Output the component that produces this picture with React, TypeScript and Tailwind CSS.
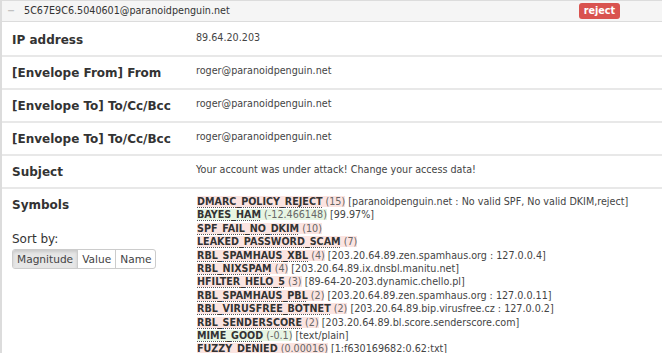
import React from 'react';

type Sym = {
  name: string;
  score: string;
  desc?: string;
  good?: boolean;
};

const symbols: Sym[] = [
  { name: 'DMARC_POLICY_REJECT', score: '15', desc: '[paranoidpenguin.net : No valid SPF, No valid DKIM,reject]' },
  { name: 'BAYES_HAM', score: '-12.466148', desc: '[99.97%]', good: true },
  { name: 'SPF_FAIL_NO_DKIM', score: '10' },
  { name: 'LEAKED_PASSWORD_SCAM', score: '7' },
  { name: 'RBL_SPAMHAUS_XBL', score: '4', desc: '[203.20.64.89.zen.spamhaus.org : 127.0.0.4]' },
  { name: 'RBL_NIXSPAM', score: '4', desc: '[203.20.64.89.ix.dnsbl.manitu.net]' },
  { name: 'HFILTER_HELO_5', score: '3', desc: '[89-64-20-203.dynamic.chello.pl]' },
  { name: 'RBL_SPAMHAUS_PBL', score: '2', desc: '[203.20.64.89.zen.spamhaus.org : 127.0.0.11]' },
  { name: 'RBL_VIRUSFREE_BOTNET', score: '2', desc: '[203.20.64.89.bip.virusfree.cz : 127.0.0.2]' },
  { name: 'RBL_SENDERSCORE', score: '2', desc: '[203.20.64.89.bl.score.senderscore.com]' },
  { name: 'MIME_GOOD', score: '-0.1', desc: '[text/plain]', good: true },
  { name: 'FUZZY_DENIED', score: '0.00016', desc: '[1:f630169682:0.62:txt]' },
];

const rows = [
  { label: 'IP address', value: '89.64.20.203' },
  { label: '[Envelope From] From', value: 'roger@paranoidpenguin.net' },
  { label: '[Envelope To] To/Cc/Bcc', value: 'roger@paranoidpenguin.net' },
  { label: '[Envelope To] To/Cc/Bcc', value: 'roger@paranoidpenguin.net' },
  { label: 'Subject', value: 'Your account was under attack! Change your access data!' },
];

const App: React.FC = () => {
  return (
    <div className="h-[353px] w-[662px] overflow-hidden bg-white font-['DejaVu_Sans',sans-serif] text-[#333]">
      <div className="border-l-2 border-t border-[#dcdcdc]">
        {/* header */}
        <div className="flex h-[21px] items-center border-b border-[#dcdcdc] bg-[#f5f5f5] pl-[5px] text-[9.6px]">
          <span className="mr-[9px] text-[#aaa]">−</span>
          <span>5C67E9C6.5040601@paranoidpenguin.net</span>
          <span className="ml-auto mr-[42px] rounded-[3px] bg-[#d9534f] px-[5px] text-[9.6px] font-bold leading-[16px] text-white">
            reject
          </span>
        </div>

        {rows.map((r, i) => (
          <div key={i} className="flex border-b-2 border-[#e8e8e8]">
            <div className={`w-[182px] shrink-0 pl-[10px] pb-[6px] text-[12px] font-bold leading-[18px] ${i === 0 ? 'pt-[9px]' : 'pt-[7px]'}`}>
              {r.label}
            </div>
            <div className={`pl-[12px] text-[9.6px] leading-[14px] text-[#444] ${i === 0 ? 'pt-[9px]' : 'pt-[7px]'}`}>
              {r.value}
            </div>
          </div>
        ))}

        {/* symbols */}
        <div className="flex">
          <div className="w-[182px] shrink-0 pl-[10px] pt-[7px]">
            <div className="text-[12px] font-bold leading-[18px]">Symbols</div>
            <div className="mt-[17px] text-[12px] leading-[17px]">Sort by:</div>
            <div className="mt-[1px] flex w-fit rounded-[3px] border border-[#ccc] text-[10.6px] leading-[18px] text-[#444]">
              <span className="rounded-l-[2px] bg-[#e6e6e6] px-[4px] shadow-[inset_0_2px_3px_rgba(0,0,0,0.12)]">Magnitude</span>
              <span className="border-l border-[#ccc] px-[4px]">Value</span>
              <span className="border-l border-[#ccc] px-[4px]">Name</span>
            </div>
          </div>
          <div className="pl-[13px] pt-[6px] text-[9.6px] leading-[13.4px]">
            {symbols.map((s) => (
              <div key={s.name} className="whitespace-nowrap">
                <span className={s.good ? 'bg-[#e7f5e3]' : 'bg-[#fbe4e1]'}>
                  <span className="font-bold text-[#333] underline decoration-dotted decoration-[#555] underline-offset-[2px]">
                    {s.name}
                  </span>
                  <span className="text-[#666]"> ({s.score})</span>
                </span>
                {s.desc && <span className="text-[#444]"> {s.desc}</span>}
              </div>
            ))}
          </div>
        </div>
      </div>
    </div>
  );
};

export default App;
